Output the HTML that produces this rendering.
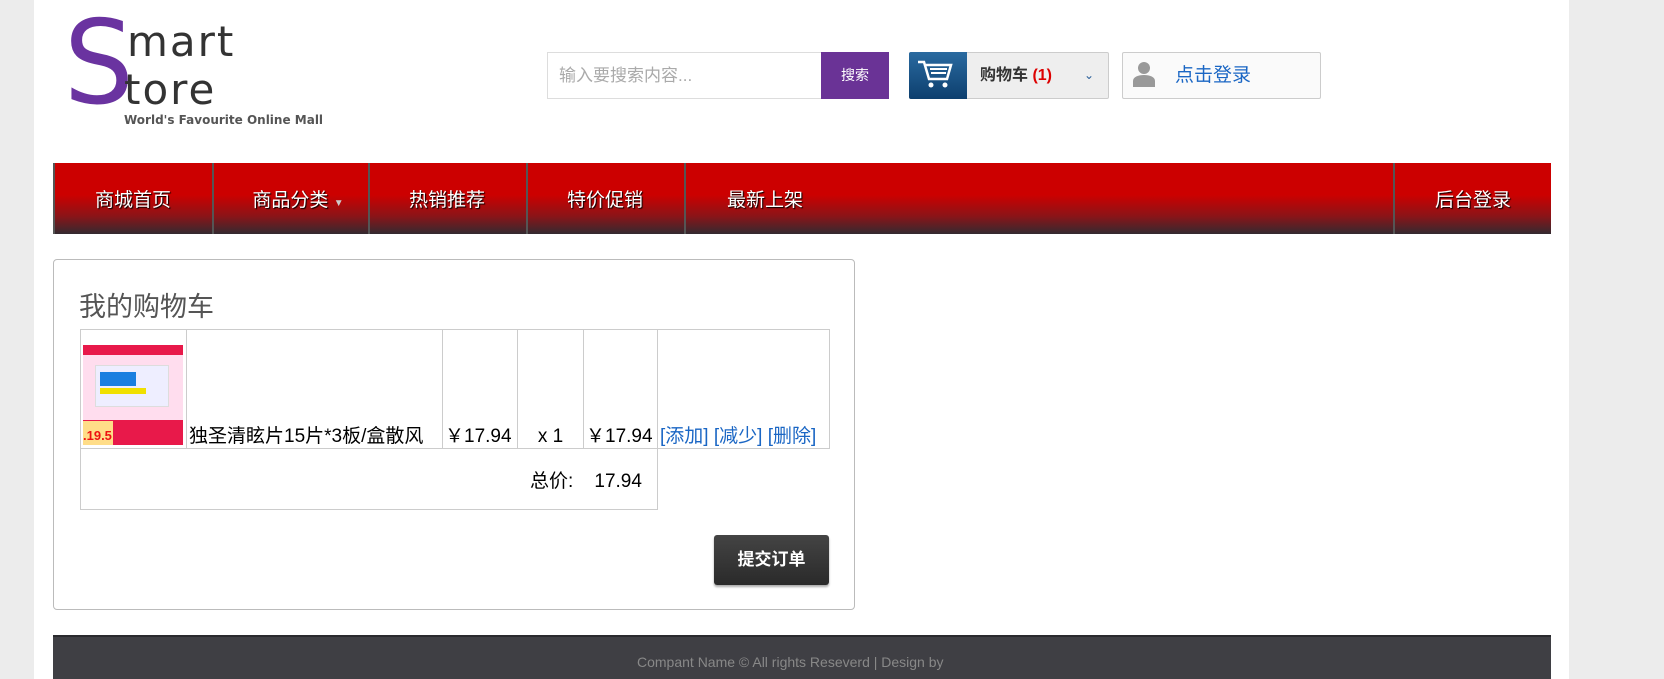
<!DOCTYPE html>
<html><head><meta charset="utf-8"><style>
*{margin:0;padding:0;box-sizing:border-box}
body{width:1664px;height:679px;overflow:hidden;background:#ececec;font-family:"Liberation Sans","Noto Sans CJK SC",sans-serif;position:relative}
.page{position:absolute;left:34px;top:0;width:1535px;height:679px;background:#fff}
.abs{position:absolute}
.nav{position:absolute;left:53px;top:163px;width:1498px;height:71px;background:linear-gradient(#cc0000 0%,#cc0000 45%,#8a1418 75%,#332a30 100%)}
.nav div.d{position:absolute;top:0;width:2px;height:71px;background:#555}
.nav span{position:absolute;top:2px;line-height:71px;color:#fff;font-size:19px;text-shadow:1px 1px 1px #000;transform:translateX(-50%);white-space:nowrap}
table{border-collapse:collapse}
td{border:1px solid #ccc;font-size:19px;vertical-align:bottom;padding:0 2px;white-space:nowrap}
a{color:#1a66c4;text-decoration:none}
</style></head><body>
<div class="page"></div>
<!-- logo -->
<div class="abs" style="left:62px;top:2px;font-size:116px;line-height:124px;color:#6a33a0;font-family:'DejaVu Sans',sans-serif;transform:scaleX(0.95)">S</div>
<div class="abs" style="left:127px;top:20px;font-size:42px;line-height:44px;color:#333;font-family:'DejaVu Sans',sans-serif;letter-spacing:2px">mart</div>
<div class="abs" style="left:124px;top:68px;font-size:42px;line-height:44px;color:#333;font-family:'DejaVu Sans',sans-serif;letter-spacing:2px">tore</div>
<div class="abs" style="left:124px;top:113px;font-size:12px;font-weight:bold;color:#555;font-family:'DejaVu Sans',sans-serif">World's Favourite Online Mall</div>
<!-- search -->
<div class="abs" style="left:547px;top:52px;width:275px;height:47px;border:1px solid #ddd;color:#aaa;font-size:17px;line-height:45px;padding-left:11px">输入要搜索内容...</div>
<div class="abs" style="left:821px;top:52px;width:68px;height:47px;background:#6a3396;color:#fff;font-size:14px;line-height:47px;text-align:center">搜索</div>
<!-- cart -->
<div class="abs" style="left:909px;top:52px;width:200px;height:47px;border:1px solid #ccc;border-radius:2px;background:#eee"></div>
<div class="abs" style="left:909px;top:52px;width:58px;height:47px;background:linear-gradient(#2a6aa0,#0d3f6e);border-radius:2px 0 0 2px">
<svg width="58" height="47" viewBox="0 0 58 47"><path d="M9 10h6l5 17h18l4-14H17" fill="none" stroke="#fff" stroke-width="2.5"/><path d="M21 17h17M22 21h15" stroke="#fff" stroke-width="2"/><circle cx="22" cy="33" r="2.5" fill="#fff"/><circle cx="36" cy="33" r="2.5" fill="#fff"/></svg></div>
<div class="abs" style="left:980px;top:52px;line-height:47px;font-size:16px;color:#333;font-weight:bold">购物车 <span style="color:#d00">(1)</span></div>
<div class="abs" style="left:1084px;top:52px;line-height:47px;font-size:12px;color:#2a5f9a">&#8964;</div>
<!-- login -->
<div class="abs" style="left:1122px;top:52px;width:199px;height:47px;border:1px solid #ccc;border-radius:2px;background:#fafafa"></div>
<svg class="abs" style="left:1133px;top:61px" width="22" height="26" viewBox="0 0 22 26"><circle cx="11" cy="7" r="6" fill="#999"/><path d="M0 26v-6c0-4 5-6 11-6s11 2 11 6v6z" fill="#999"/></svg>
<div class="abs" style="left:1175px;top:52px;line-height:47px;font-size:19px;color:#1a66c4">点击登录</div>
<!-- nav -->
<div class="nav">
<div class="d" style="left:0"></div><div class="d" style="left:159px"></div><div class="d" style="left:315px"></div><div class="d" style="left:473px"></div><div class="d" style="left:631px"></div><div class="d" style="left:1340px"></div>
<span style="left:80px">商城首页</span>
<span style="left:245px">商品分类 <small style="font-size:10px;color:#ccc;text-shadow:none">&#9660;</small></span>
<span style="left:394px">热销推荐</span>
<span style="left:552px">特价促销</span>
<span style="left:712px">最新上架</span>
<span style="left:1420px">后台登录</span>
</div>
<!-- panel -->
<div class="abs" style="left:53px;top:259px;width:802px;height:351px;border:1px solid #bbb;border-radius:4px"></div>
<div class="abs" style="left:79px;top:285px;font-size:27px;color:#555">我的购物车</div>
<table class="abs" style="left:80px;top:329px;width:750px">
<tr style="height:119px">
<td style="width:106px;padding:0;vertical-align:middle"><div style="margin:12px 0 0 2px;width:100px;height:100px;background:linear-gradient(#e8194a 0 10%,#fde 10% 75%,#e8194a 75%);position:relative">
<div style="position:absolute;left:12px;top:20px;width:74px;height:42px;background:#eef;border:1px solid #ddd"><div style="margin:6px 0 0 4px;width:36px;height:14px;background:#1a7fe0"></div><div style="margin:2px 0 0 4px;width:46px;height:6px;background:#f0e000"></div></div>
<div style="position:absolute;left:0;top:76px;width:30px;height:24px;background:#fd8;color:#e11;font-size:13px;font-weight:bold;line-height:30px">.19.5</div></div></td>
<td style="width:256px">独圣清眩片15片*3板/盒散风</td>
<td style="width:75px">￥17.94</td>
<td style="width:66px;text-align:center">x 1</td>
<td style="width:74px">￥17.94</td>
<td><a>[添加]</a> <a>[减少]</a> <a>[删除]</a></td>
</tr></table>
<div class="abs" style="left:80px;top:448px;width:578px;height:62px;border:1px solid #ccc;border-top:none"></div>
<div class="abs" style="left:530px;top:466px;font-size:19px">总价: &nbsp;&nbsp;&nbsp;17.94</div>
<div class="abs" style="left:714px;top:535px;width:115px;height:50px;background:linear-gradient(#444,#2a2a2a);border-radius:3px;color:#fff;font-weight:bold;font-size:17px;line-height:50px;text-align:center;box-shadow:0 2px 2px #aaa">提交订单</div>
<!-- footer -->
<div class="abs" style="left:53px;top:635px;width:1498px;height:44px;background:#3f3f44;border-top:2px solid #2a2a2e"></div>
<div class="abs" style="left:637px;top:654px;font-size:14px;color:#888">Compant Name © All rights Reseverd | Design by</div>
</body></html>
